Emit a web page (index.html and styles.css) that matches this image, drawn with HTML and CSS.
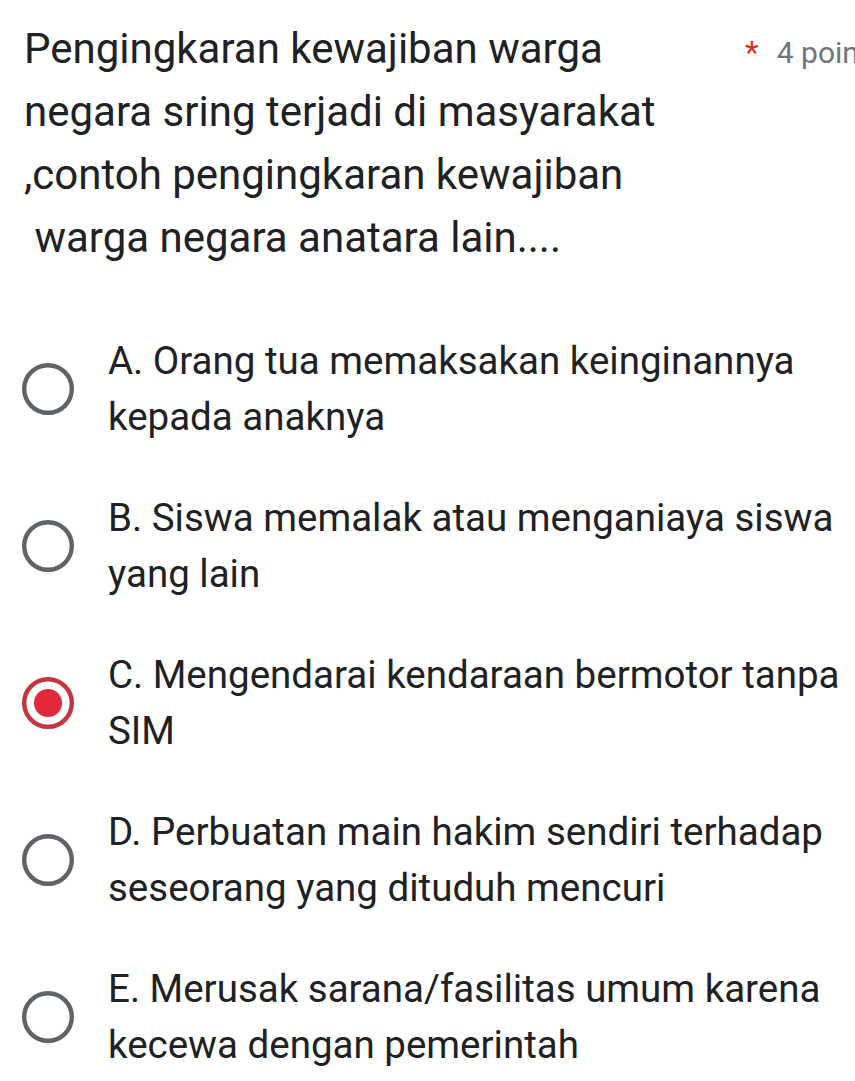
FILE: index.html
```html
<!DOCTYPE html>
<html lang="id">
<head>
<meta charset="utf-8">
<link rel="stylesheet" href="styles.css">
</head>
<body>
<div class="page">
  <div class="header">
    <div class="title">Pengingkaran kewajiban warga<br>negara sring terjadi di masyarakat<br>,contoh pengingkaran kewajiban<br>&nbsp;warga negara anatara lain....</div>
    <div class="points"><span class="req">*</span>4 poin</div>
  </div>
  <div class="options">
    <div class="option">
      <svg class="radio" viewBox="0 0 56 56" width="56" height="56"><circle cx="28" cy="28" r="23.8" fill="none" stroke="#5f6368" stroke-width="4.4"/></svg>
      <div class="label">A. Orang tua memaksakan keinginannya<br>kepada anaknya</div>
    </div>
    <div class="option">
      <svg class="radio" viewBox="0 0 56 56" width="56" height="56"><circle cx="28" cy="28" r="23.8" fill="none" stroke="#5f6368" stroke-width="4.4"/></svg>
      <div class="label">B. Siswa memalak atau menganiaya siswa<br>yang lain</div>
    </div>
    <div class="option">
      <svg class="radio" viewBox="0 0 56 56" width="56" height="56"><circle cx="28" cy="28" r="23.8" fill="none" stroke="#c5343f" stroke-width="4.4"/><circle cx="28" cy="28" r="14" fill="#e2283a"/></svg>
      <div class="label">C. Mengendarai kendaraan bermotor tanpa<br>SIM</div>
    </div>
    <div class="option">
      <svg class="radio" viewBox="0 0 56 56" width="56" height="56"><circle cx="28" cy="28" r="23.8" fill="none" stroke="#5f6368" stroke-width="4.4"/></svg>
      <div class="label">D. Perbuatan main hakim sendiri terhadap<br>seseorang yang dituduh mencuri</div>
    </div>
    <div class="option">
      <svg class="radio" viewBox="0 0 56 56" width="56" height="56"><circle cx="28" cy="28" r="23.8" fill="none" stroke="#5f6368" stroke-width="4.4"/></svg>
      <div class="label">E. Merusak sarana/fasilitas umum karena<br>kecewa dengan pemerintah</div>
    </div>
  </div>
</div>
</body>
</html>
```

FILE: styles.css
```css
html, body {
  margin: 0;
  padding: 0;
  background: #ffffff;
}
body {
  font-family: Roboto, "Noto Sans", "Liberation Sans", sans-serif;
  color: #202124;
  overflow: hidden;
}
.page {
  width: 855px;
  overflow: hidden;
}
.header {
  display: flex;
  align-items: baseline;
  padding: 17px 0 0 24px;
  white-space: nowrap;
}
.title {
  flex: 0 0 721px;
  font-size: 42px;
  line-height: 63px;
}
.points {
  font-size: 30px;
  color: #70757a;
  white-space: nowrap;
}
.req {
  color: #d93025;
  font-size: 32px;
  margin-right: 18px;
}
.options {
  display: flex;
  flex-direction: column;
  gap: 45px;
  padding: 64px 0 0 20px;
}
.option {
  display: flex;
  align-items: center;
  gap: 32px;
}
.radio {
  flex: 0 0 56px;
  display: block;
}
.label {
  font-size: 38.5px;
  line-height: 56px;
  white-space: nowrap;
}
```
